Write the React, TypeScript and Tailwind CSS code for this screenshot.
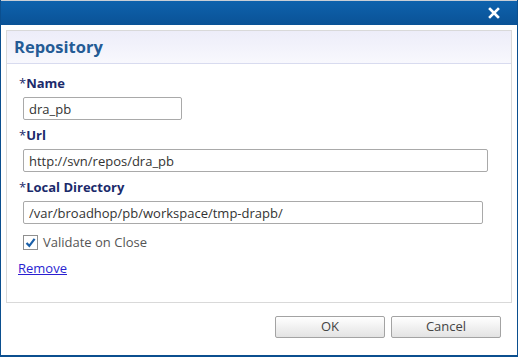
import React from "react";

function Field({ label, value, width }: { label: string; value: string; width: string }) {
  return (
    <div>
      <div className="pl-[12px] text-[13px] font-bold leading-[16px] text-[#1b2a6b]">
        <span className="font-normal">*</span>
        {label}
      </div>
      <input
        readOnly
        value={value}
        className={`mt-[6px] ml-[16px] block h-[23px] ${width} rounded-[2px] border border-[#a9a9a9] px-[5px] text-[13px] text-[#333] outline-none`}
      />
    </div>
  );
}

export default function App() {
  return (
    <div
      className="flex h-[357px] w-[518px] flex-col border-x border-b-2 border-[#0b4f8f] bg-white"
      style={{ fontFamily: "'Open Sans', 'Noto Sans', sans-serif" }}
    >
      <div className="flex h-[25px] items-center justify-end border-t border-[#c8ced6] bg-gradient-to-b from-[#0e62ad] to-[#0a5296] pr-[17px]">
        <svg width="12" height="12" viewBox="0 0 12 12">
          <path d="M2 2 L10 10 M10 2 L2 10" stroke="white" strokeWidth="2.6" strokeLinecap="square" />
        </svg>
      </div>

      <div className="mx-[5px] mt-[5px] h-[273px] border border-[#d9d9d9]">
        <div className="flex h-[33px] items-center border-b border-[#d8dbef] bg-gradient-to-b from-[#ededf9] to-[#f8f8fd] pl-[7px] text-[16.5px] font-bold text-[#245b95]">
          Repository
        </div>
        <div className="flex flex-col gap-[7px] pt-[11px]">
          <Field label="Name" value="dra_pb" width="w-[159px]" />
          <Field label="Url" value="http://svn/repos/dra_pb" width="w-[465px]" />
          <Field label="Local Directory" value="/var/broadhop/pb/workspace/tmp-drapb/" width="w-[460px]" />
        </div>
        <label className="mt-[9px] ml-[16px] flex items-center gap-[5px] text-[13px] text-[#555]">
          <span className="flex h-[15px] w-[15px] items-center justify-center border border-[#8f8f8f] bg-white">
            <svg width="11" height="11" viewBox="0 0 11 11">
              <path d="M1.5 6 L4.3 8.8 L9.6 1.8" fill="none" stroke="#1a5fa8" strokeWidth="2.2" />
            </svg>
          </span>
          Validate on Close
        </label>
        <a href="#" className="mt-[6px] ml-[11px] block w-fit text-[13px] text-[#2a1fd1] underline">
          Remove
        </a>
      </div>

      <div className="mt-[13px] flex justify-end gap-[6px] pr-[16px]">
        <button className="h-[22px] w-[110px] rounded-[2px] border border-[#a3a3a3] bg-gradient-to-b from-white to-[#e3e3e3] text-[13px] text-[#444]">
          OK
        </button>
        <button className="h-[22px] w-[110px] rounded-[2px] border border-[#a3a3a3] bg-gradient-to-b from-white to-[#e3e3e3] text-[13px] text-[#444]">
          Cancel
        </button>
      </div>
    </div>
  );
}
